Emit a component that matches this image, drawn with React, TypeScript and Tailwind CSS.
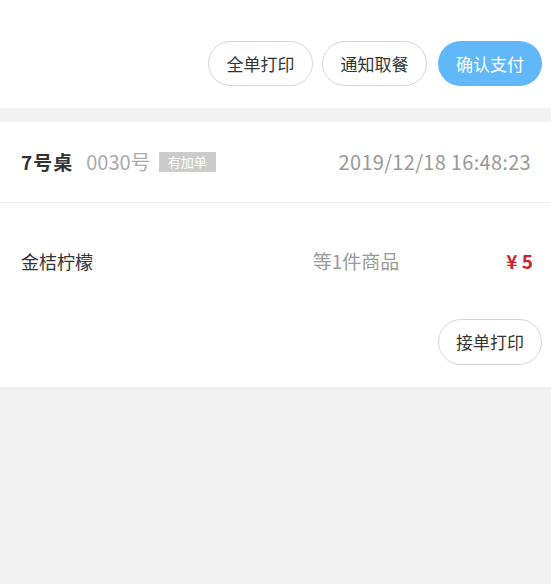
export default function App() {
  const font = { fontFamily: '"Noto Sans CJK SC", "Noto Sans", sans-serif' }
  return (
    <div className="min-h-[584px] bg-[#f1f1f1] text-[#333]" style={font}>
      <div className="flex h-[108px] items-end justify-end gap-[9px] bg-white pr-[9px] pb-[22px]">
        <button className="h-[45px] w-[105px] rounded-full border border-[#d6d6d6] bg-white text-[17px] text-[#333]">
          全单打印
        </button>
        <button className="h-[45px] w-[105px] rounded-full border border-[#d6d6d6] bg-white text-[17px] text-[#333]">
          通知取餐
        </button>
        <button className="ml-[2px] h-[45px] w-[104px] rounded-full bg-[#60b7fa] text-[17px] text-white">
          确认支付
        </button>
      </div>
      <div className="mt-[14px] bg-white">
        <div className="flex h-[81px] items-center justify-between border-b border-[#eeeeee] pr-[20px] pl-[21px]">
          <div className="flex items-center">
            <span className="text-[19px] font-bold tracking-[1px] text-[#333]">7号桌</span>
            <span className="ml-[13px] text-[20px] text-[#aaa]">0030号</span>
            <span className="ml-[8px] bg-[#cccccc] px-[9px] text-[13px] leading-[20px] text-white">有加单</span>
          </div>
          <span className="text-[20px] tracking-[0.3px] text-[#999]">2019/12/18 16:48:23</span>
        </div>
        <div className="flex h-[116px] items-center pr-[18px] pl-[21px]">
          <span className="flex-1 text-[18px] text-[#333]">金桔柠檬</span>
          <span className="mr-[107px] text-[19px] text-[#999]">等1件商品</span>
          <span className="text-[19px] font-bold text-[#c9252d]">¥ 5</span>
        </div>
        <div className="flex justify-end pr-[9px] pb-[22px]">
          <button className="h-[46px] w-[104px] rounded-full border border-[#d6d6d6] bg-white text-[17px] text-[#333]">
            接单打印
          </button>
        </div>
      </div>
    </div>
  )
}
